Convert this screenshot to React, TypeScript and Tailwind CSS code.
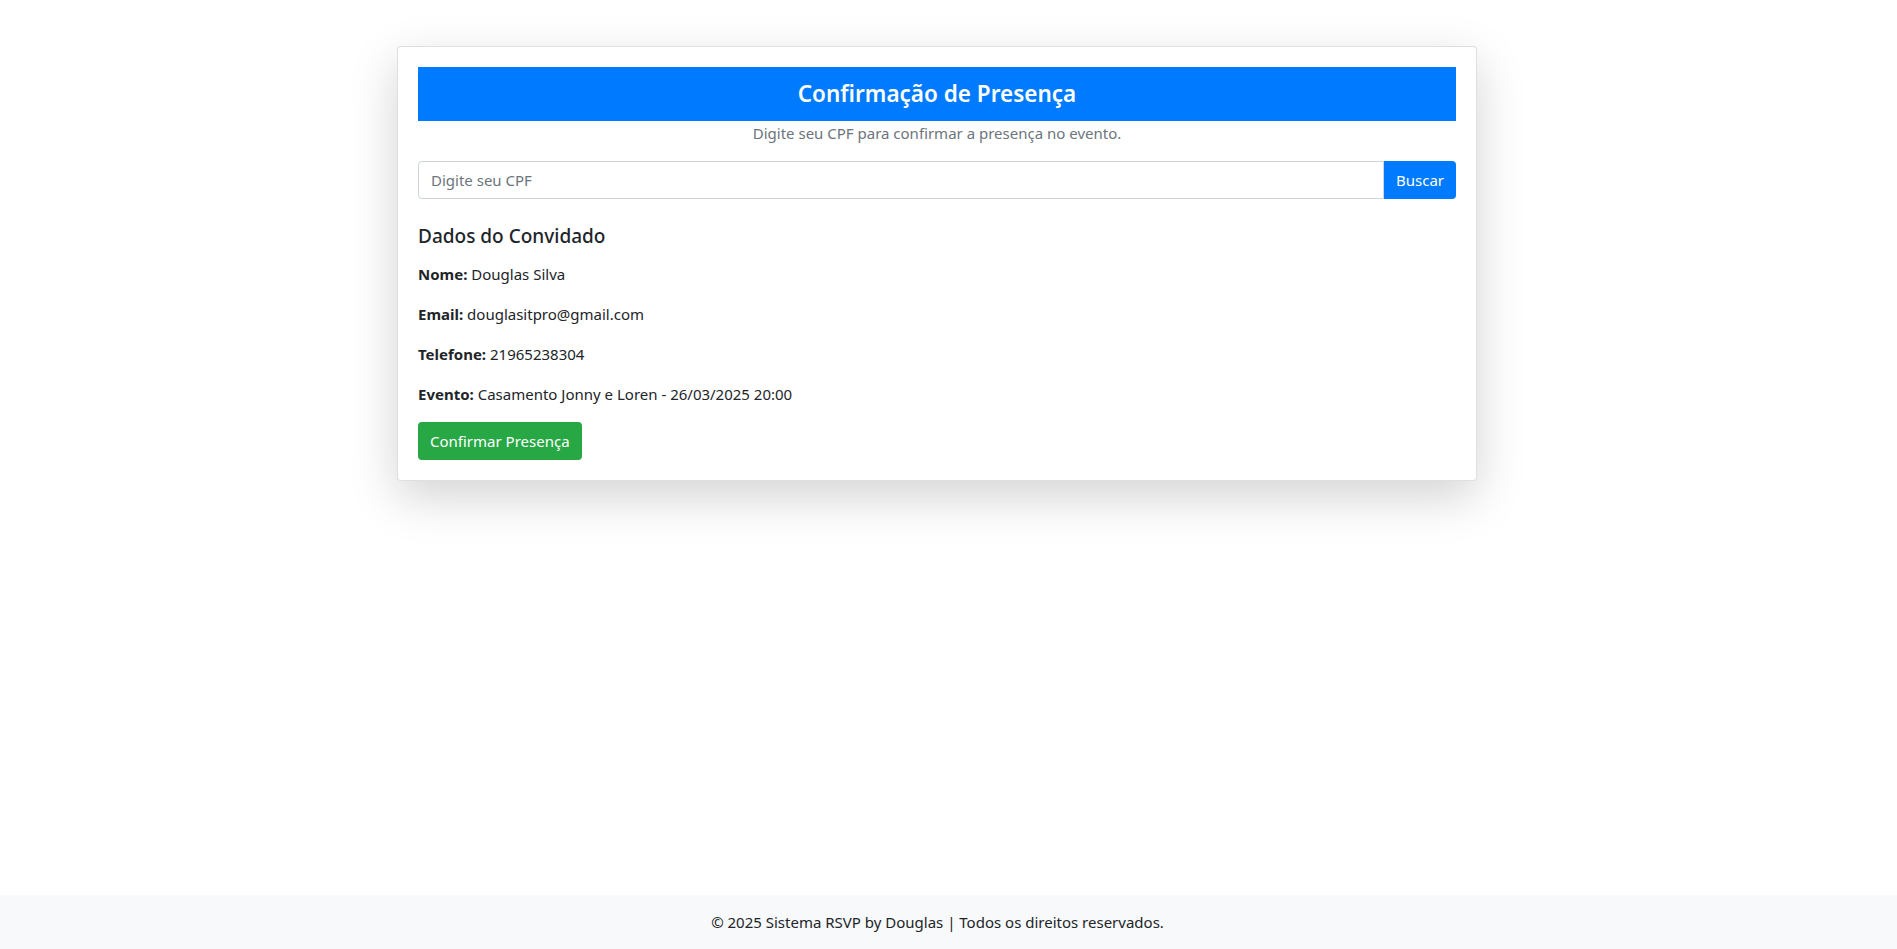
import { useState } from "react";

function App() {
	const [cpf, setCpf] = useState("");
	const convidado = {
		nome: "Douglas Silva",
		email: "douglasitpro@gmail.com",
		telefone: "21965238304",
		evento: "Casamento Jonny e Loren - 26/03/2025 20:00",
	};
	const campos = [
		{ label: "Nome:", value: convidado.nome },
		{ label: "Email:", value: convidado.email },
		{ label: "Telefone:", value: convidado.telefone },
		{ label: "Evento:", value: convidado.evento },
	];

	return (
		<div className="min-h-screen flex flex-col bg-white text-[#212529] font-['Noto_Sans',sans-serif] text-[15px]">
			<main className="flex-1 pt-[46px]">
				<div className="ml-[397px] w-[1080px] bg-white border border-black/[0.125] rounded shadow-[0_16px_48px_rgba(0,0,0,0.175)] p-5">
					<h3 className="bg-[#007bff] text-white text-center font-semibold text-[22.5px] leading-[34px] py-[10px]">
						Confirmação de Presença
					</h3>
					<p className="text-center text-[#6c757d] leading-6 mb-4">
						Digite seu CPF para confirmar a presença no evento.
					</p>

					<div className="flex h-[38px]">
						<input
							type="text"
							placeholder="Digite seu CPF"
							value={cpf}
							onChange={(e) => setCpf(e.target.value)}
							className="flex-1 border border-[#ced4da] rounded-l px-3 outline-none placeholder:text-[#6c757d]"
						/>
						<button className="bg-[#007bff] text-white px-3 rounded-r">
							Buscar
						</button>
					</div>

					<h5 className="mt-[25px] mb-[14px] text-[19px] leading-6 font-medium">
						Dados do Convidado
					</h5>
					{campos.map((c) => (
						<p key={c.label} className="leading-6 mb-4">
							<strong className="font-bold">{c.label}</strong> {c.value}
						</p>
					))}
					<button className="bg-[#28a745] text-white h-[38px] px-3 rounded">
						Confirmar Presença
					</button>
				</div>
			</main>

			<footer className="h-[54px] bg-[#f8f9fa] flex items-center justify-center pr-[22px]">
				<p>© 2025 Sistema RSVP by Douglas | Todos os direitos reservados.</p>
			</footer>
		</div>
	);
}

export default App;
